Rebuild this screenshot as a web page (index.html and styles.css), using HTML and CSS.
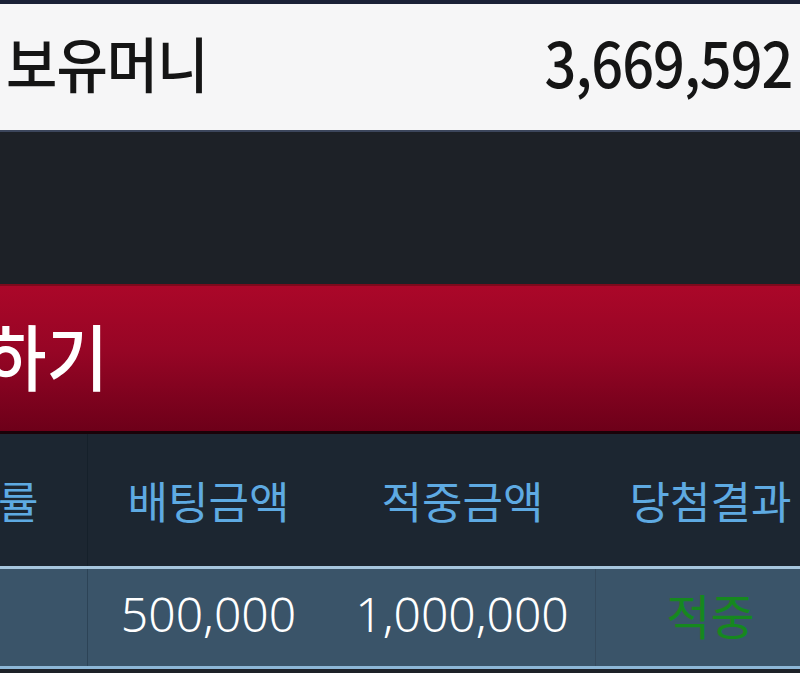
FILE: index.html
```html
<!DOCTYPE html>
<html lang="ko">
<head>
<meta charset="utf-8">
<link rel="stylesheet" href="styles.css">
</head>
<body>
<div class="page">
  <div class="topbar"></div>
  <div class="money-row">
    <span class="money-label">보유머니</span>
    <span class="money-value">3,669,592</span>
  </div>
  <div class="spacer"></div>
  <div class="banner"><span class="banner-text">하기</span></div>
  <div class="table">
    <div class="row head">
      <div class="cell c1"><span class="cut">률</span></div>
      <div class="cell c2">배팅금액</div>
      <div class="cell c3">적중금액</div>
      <div class="cell c4">당첨결과</div>
    </div>
    <div class="row data">
      <div class="cell c1"></div>
      <div class="cell c2 num">500,000</div>
      <div class="cell c3 num">1,000,000</div>
      <div class="cell c4 win">적중</div>
    </div>
  </div>
</div>
</body>
</html>
```
FILE: styles.css
```css
html, body {
  margin: 0;
  padding: 0;
  background: #1d2127;
  overflow: hidden;
}
.page {
  width: 800px;
  height: 673px;
  overflow: hidden;
  font-family: "Noto Sans CJK KR", "Noto Sans", sans-serif;
}
.topbar {
  height: 4px;
  background: #1a2136;
}
.money-row {
  height: 128px;
  box-sizing: border-box;
  padding: 0 8px 12px 6px;
  background: #f6f6f7;
  border-bottom: 2px solid #3c465c;
  display: flex;
  align-items: center;
  justify-content: space-between;
  color: #151515;
}
.money-label {
  font-size: 60px;
  font-weight: 500;
  display: inline-block;
  transform: scaleX(0.93);
  transform-origin: left center;
  letter-spacing: -1px;
}
.money-value {
  font-size: 62px;
  font-weight: 500;
  display: inline-block;
  transform: scaleX(0.9);
  transform-origin: right center;
  letter-spacing: -1px;
}
.spacer {
  height: 152px;
  background: #1d2127;
}
.banner {
  height: 150px;
  box-sizing: border-box;
  padding-bottom: 10px;
  border-top: 2px solid #7e0a1c;
  border-bottom: 3px solid #1a0208;
  background: linear-gradient(to bottom, #ab0729 0%, #960525 45%, #6d0019 100%);
  display: flex;
  align-items: center;
  overflow: hidden;
}
.banner-text {
  color: #ffffff;
  font-size: 72px;
  font-weight: 500;
  margin-left: -15px;
  display: inline-block;
  transform: scaleX(0.93);
  transform-origin: left center;
}
.table {
  width: 826px;
}
.row {
  display: flex;
}
.cell {
  display: flex;
  align-items: center;
  justify-content: center;
  overflow: hidden;
  box-sizing: border-box;
}
.c1 { width: 88px; border-right: 1px solid #15202a; justify-content: flex-start; }
.c2 { width: 241px; }
.c3 { width: 267px; }
.c4 { width: 229px; }
.head {
  height: 132px;
  background: #1c2631;
  border-bottom: 3px solid #a6c6de;
  color: #5eaae2;
  font-size: 44px;
  font-weight: 400;
}
.cut {
  margin-left: -2px;
}
.data {
  height: 100px;
  box-sizing: border-box;
  background: #3a5469;
  border-bottom: 3px solid #8db7d7;
  color: #ffffff;
  font-size: 48px;
  font-weight: 300;
}
.data .cell {
  padding-bottom: 8px;
}
.num {
  font-family: "Noto Sans", "Noto Sans CJK KR", sans-serif;
  font-weight: 300;
}
.data .c1 { border-right-color: #2c4356; }
.data .c3 { border-right: 1px solid #34495c; }
.win {
  color: #16881f;
  font-weight: 400;
}
```
